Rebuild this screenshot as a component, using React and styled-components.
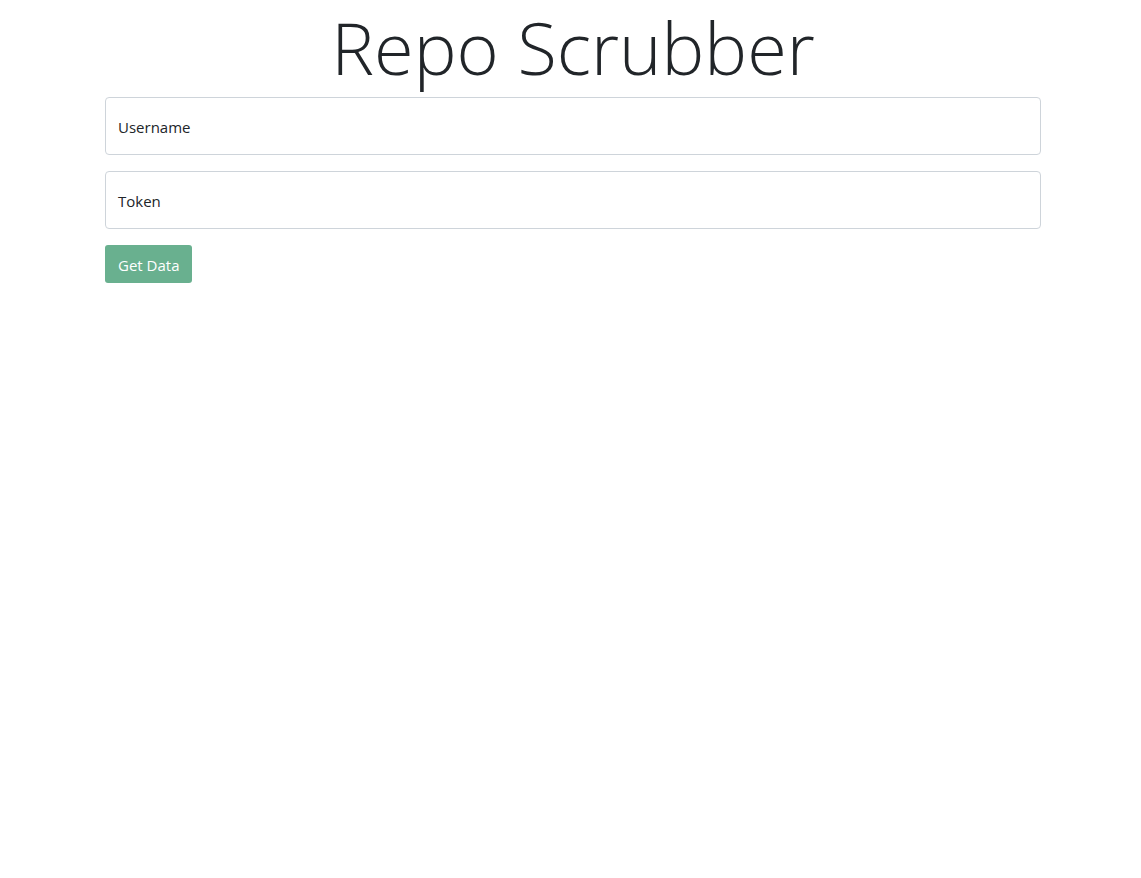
import React, { useState } from "react";
import styled, { createGlobalStyle } from "styled-components";

const GlobalStyle = createGlobalStyle`
  *, *::before, *::after { box-sizing: border-box; }
  body {
    margin: 0;
    padding-left: 5px;
    font-family: "Open Sans", "Noto Sans", sans-serif;
    font-size: 15px;
    line-height: 24px;
    color: #212529;
    background: #fff;
  }
`;

const Container = styled.main`
  width: 100%;
  max-width: 960px;
  margin: 0 auto;
  padding: 0 12px;
`;

const Title = styled.h1`
  margin: 0 0 3px;
  font-size: 72px;
  font-weight: 300;
  line-height: 94px;
  text-align: center;
`;

const Form = styled.form`
  display: flex;
  flex-direction: column;
  align-items: flex-start;
  gap: 16px;
`;

const Field = styled.div`
  position: relative;
  width: 100%;
`;

const Input = styled.input`
  display: block;
  width: 100%;
  height: 58px;
  padding: 16px 12px;
  border: 1px solid #ced4da;
  border-radius: 4px;
  background: #fff;
  color: inherit;
  font: inherit;
  &:focus, &:not(:placeholder-shown) { padding: 26px 12px 10px; }
`;

const Label = styled.label`
  position: absolute;
  top: 0;
  left: 0;
  padding: 18px 13px;
  pointer-events: none;
  transform-origin: 0 0;
  transition: transform 0.1s ease-in-out;
  ${Input}:focus ~ &, ${Input}:not(:placeholder-shown) ~ & {
    opacity: 0.65;
    transform: scale(0.85) translateY(-8px);
  }
`;

const Button = styled.button`
  height: 38px;
  padding: 8px 13px 6px;
  border: 0;
  border-radius: 3px;
  background: #69b08f;
  color: #fff;
  font: inherit;
`;

function FloatingField({ id, label, value, onChange }) {
  return (
    <Field>
      <Input id={id} placeholder=" " value={value} onChange={(e) => onChange(e.target.value)} />
      <Label htmlFor={id}>{label}</Label>
    </Field>
  );
}

export default function App() {
  const [username, setUsername] = useState("");
  const [token, setToken] = useState("");
  return (
    <>
      <GlobalStyle />
      <Container>
        <Title>Repo Scrubber</Title>
        <Form onSubmit={(e) => e.preventDefault()}>
          <FloatingField id="username" label="Username" value={username} onChange={setUsername} />
          <FloatingField id="token" label="Token" value={token} onChange={setToken} />
          <Button type="submit" disabled={!username || !token}>Get Data</Button>
        </Form>
      </Container>
    </>
  );
}
